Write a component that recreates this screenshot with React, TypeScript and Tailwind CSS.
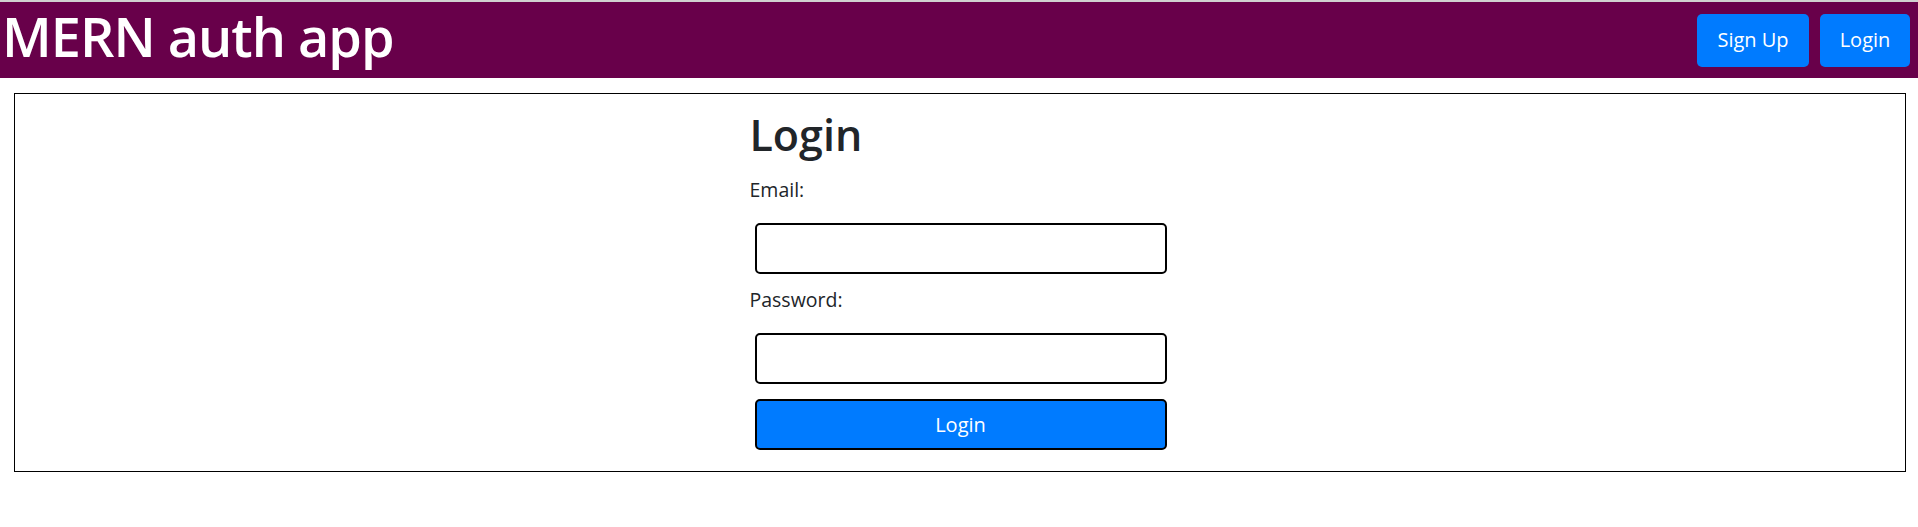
export default function App() {
  return (
    <div className="min-h-[527px] bg-white font-['Open_Sans',sans-serif] text-[#212529]">
      {/* Top bar */}
      <header className="flex h-[78px] items-center justify-between border-t-2 border-[#d0d0d0] bg-[#68004a] pl-[2px] pr-[8px]">
        <h1 className="mb-[8px] text-[54px] font-semibold leading-none tracking-[-1px] text-white">MERN auth app</h1>
        <nav className="flex gap-[11px]">
          <button className="h-[53px] w-[112px] rounded-[5px] bg-[#007bff] text-[20px] text-white">Sign Up</button>
          <button className="h-[53px] w-[90px] rounded-[5px] bg-[#007bff] text-[20px] text-white">Login</button>
        </nav>
      </header>

      {/* Card */}
      <main className="ml-[14px] mr-[12px] mt-[15px] border border-black pb-[21px]">
        <form className="mx-auto flex w-[423px] flex-col pl-[1px]">
          <h2 className="mt-[12px] text-[43px] font-semibold leading-[58px]">Login</h2>
          <label className="mt-[11px] text-[19.5px] leading-[29px]">Email:</label>
          <input type="email" className="mx-[5px] mt-[19px] h-[51px] rounded-[5px] border-2 border-black outline-none" />
          <label className="mt-[11px] text-[19.5px] leading-[29px]">Password:</label>
          <input type="password" className="mx-[5px] mt-[19px] h-[51px] rounded-[5px] border-2 border-black outline-none" />
          <button type="button" className="mx-[5px] mt-[15px] h-[51px] rounded-[5px] border-2 border-black bg-[#007bff] text-[20px] text-white">Login</button>
        </form>
      </main>
    </div>
  )
}
